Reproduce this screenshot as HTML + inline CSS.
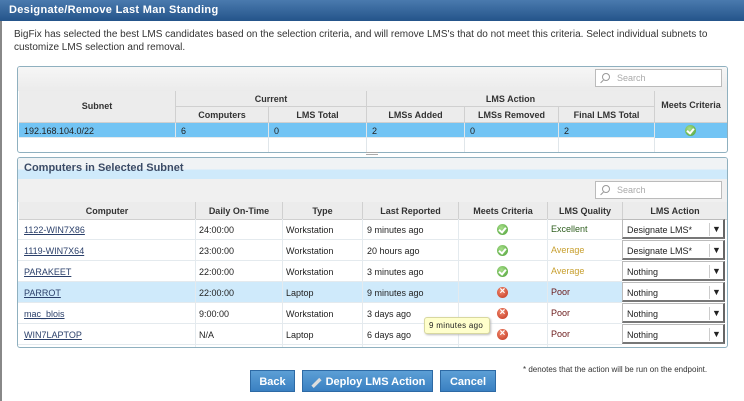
<!DOCTYPE html>
<html><head><meta charset="utf-8"><style>
*{box-sizing:border-box;margin:0;padding:0}
body{width:744px;height:401px;background:#fff;font-family:"Liberation Sans",sans-serif;font-size:9px;color:#222;position:relative;overflow:hidden}
.a{position:absolute}
.title{left:0;top:0;width:744px;height:21px;background:linear-gradient(#4a7aae,#24548a);color:#fff;font-weight:bold;font-size:11px;padding:4px 0 0 9px;letter-spacing:.3px}
.lb{left:0;top:21px;width:2px;height:380px;background:#888}
.txt{left:14px;top:28px;font-size:10px;line-height:13px;color:#333;width:720px}
.panel{border:1px solid #8fb0bf;border-radius:3px;background:#fff;overflow:hidden}
.search{background:#fff;border:1px solid #bbb;height:18px;width:127px;color:#aaa;font-size:9px;padding:3px 0 0 21px}
.search:before{content:"";position:absolute;left:6px;top:3px;width:6px;height:6px;border:1px solid #999;border-radius:50%}
.search:after{content:"";position:absolute;left:4px;top:11px;width:4px;height:1px;background:#999;transform:rotate(-45deg)}
.hd{background:#ececec;border-right:1px solid #d0d0d0;border-bottom:1px solid #d0d0d0;font-weight:bold;color:#333;text-align:center;font-size:9px}
.c{border-right:1px solid #e0e6ea;border-bottom:1px solid #e4eaee;font-size:9px;padding-left:5px;white-space:nowrap}
.ok,.x{width:11px;height:11px;border-radius:50%}
.ok{background:radial-gradient(circle at 40% 35%,#a8df8a,#4a9e35)}
.x{background:radial-gradient(circle at 40% 35%,#f28a6e,#c0331d)}
.ok:after{content:"";position:absolute;left:3px;top:2px;width:3px;height:5px;border:solid #fff;border-width:0 2px 2px 0;transform:rotate(40deg)}
.x:after{content:"×";position:absolute;left:2.5px;top:-1px;color:#fff;font-size:10px;font-weight:bold}
a{color:#2a3f6a;text-decoration:underline}
.sel{background:#fff;border:1px solid #bbb;border-right:2px solid #666;border-bottom:2px solid #777;height:20px;font-size:9px;padding:5px 0 0 4px}
.sel span{position:absolute;right:0;top:3px;width:14px;height:13px;border-left:1px solid #ccc;text-align:center;font-size:9px;line-height:13px}
.btn{background:linear-gradient(#5c9fd6,#3a80c2);border:1px solid #2d6aa5;color:#fff;font-weight:bold;font-size:11px;text-align:center;padding-top:5px;height:22px}
</style></head><body>
<div class="a title">Designate/Remove Last Man Standing</div>
<div class="a lb"></div>
<div class="a txt">BigFix has selected the best LMS candidates based on the selection criteria, and will remove LMS's that do not meet this criteria. Select individual subnets to customize LMS selection and removal.</div>

<div class="a panel" style="left:17px;top:66px;width:711px;height:87px">
 <div class="a" style="left:0;top:0;width:711px;height:24px;background:linear-gradient(#f6f6f6,#ebebeb)"></div>
 <div class="a search" style="left:577px;top:2px">Search</div>
 <div class="a hd" style="left:1px;top:24px;width:157px;height:32px;padding-top:10px">Subnet</div>
 <div class="a hd" style="left:158px;top:24px;width:191px;height:16px;padding-top:3px">Current</div>
 <div class="a hd" style="left:349px;top:24px;width:288px;height:16px;padding-top:3px">LMS Action</div>
 <div class="a hd" style="left:637px;top:24px;width:73px;height:32px;padding-top:9px">Meets Criteria</div>
 <div class="a hd" style="left:158px;top:40px;width:93px;height:16px;padding-top:3px">Computers</div>
 <div class="a hd" style="left:251px;top:40px;width:98px;height:16px;padding-top:3px">LMS Total</div>
 <div class="a hd" style="left:349px;top:40px;width:98px;height:16px;padding-top:3px">LMSs Added</div>
 <div class="a hd" style="left:447px;top:40px;width:94px;height:16px;padding-top:3px">LMSs Removed</div>
 <div class="a hd" style="left:541px;top:40px;width:96px;height:16px;padding-top:3px">Final LMS Total</div>
 <div class="a" style="left:1px;top:56px;width:709px;height:15px;background:#72c4f4"></div>
 <div class="a c" style="left:1px;top:56px;width:157px;height:15px;padding-top:3px">192.168.104.0/22</div>
 <div class="a c" style="left:158px;top:56px;width:93px;height:15px;padding-top:3px">6</div>
 <div class="a c" style="left:251px;top:56px;width:98px;height:15px;padding-top:3px">0</div>
 <div class="a c" style="left:349px;top:56px;width:98px;height:15px;padding-top:3px">2</div>
 <div class="a c" style="left:447px;top:56px;width:94px;height:15px;padding-top:3px">0</div>
 <div class="a c" style="left:541px;top:56px;width:96px;height:15px;padding-top:3px">2</div>
 <div class="a ok" style="left:667px;top:58px"></div>
 <div class="a c" style="left:158px;top:71px;width:93px;height:15px"></div>
 <div class="a c" style="left:251px;top:71px;width:98px;height:15px"></div>
 <div class="a c" style="left:349px;top:71px;width:98px;height:15px"></div>
 <div class="a c" style="left:447px;top:71px;width:94px;height:15px"></div>
 <div class="a c" style="left:541px;top:71px;width:96px;height:15px"></div>
</div>
<div class="a" style="left:366px;top:152px;width:12px;height:3px;border-top:1px solid #aaa;border-bottom:1px solid #aaa"></div>

<div class="a panel" style="left:17px;top:157px;width:711px;height:191px">
 <div class="a" style="left:0;top:0;width:711px;height:21px;background:linear-gradient(#f0f3f5 0%,#f0f3f5 55%,#cfeafb 56%,#cfeafb 100%)"></div>
 <div class="a" style="left:6px;top:4px;font-size:11px;font-weight:bold;color:#3b4b66">Computers in Selected Subnet</div>
 <div class="a" style="left:0;top:21px;width:711px;height:23px;background:#f0f0f0"></div>
 <div class="a search" style="left:577px;top:23px">Search</div>
 <div class="a hd" style="left:1px;top:44px;width:177px;height:18px;padding-top:4px">Computer</div>
 <div class="a hd" style="left:178px;top:44px;width:87px;height:18px;padding-top:4px">Daily On-Time</div>
 <div class="a hd" style="left:265px;top:44px;width:80px;height:18px;padding-top:4px">Type</div>
 <div class="a hd" style="left:345px;top:44px;width:96px;height:18px;padding-top:4px">Last Reported</div>
 <div class="a hd" style="left:441px;top:44px;width:89px;height:18px;padding-top:4px">Meets Criteria</div>
 <div class="a hd" style="left:530px;top:44px;width:75px;height:18px;padding-top:4px">LMS Quality</div>
 <div class="a hd" style="left:605px;top:44px;width:105px;height:18px;padding-top:4px">LMS Action</div>
</div>

<div class="a" style="left:18px;top:282px;width:604px;height:21px;background:#cfeafb"></div>
<div class="a" style="left:18px;top:219px;width:604px;height:128px;background:repeating-linear-gradient(transparent 0 20px,#e4eaee 20px 21px)"></div>
<div class="a" style="left:195px;top:219px;width:1px;height:128px;background:#e4eaee"></div>
<div class="a" style="left:282px;top:219px;width:1px;height:128px;background:#e4eaee"></div>
<div class="a" style="left:362px;top:219px;width:1px;height:128px;background:#e4eaee"></div>
<div class="a" style="left:458px;top:219px;width:1px;height:128px;background:#e4eaee"></div>
<div class="a" style="left:547px;top:219px;width:1px;height:128px;background:#e4eaee"></div>

<div class="a" style="left:24px;top:225px"><a>1122-WIN7X86</a></div>
<div class="a" style="left:24px;top:246px"><a>1119-WIN7X64</a></div>
<div class="a" style="left:24px;top:267px"><a>PARAKEET</a></div>
<div class="a" style="left:24px;top:288px"><a>PARROT</a></div>
<div class="a" style="left:24px;top:309px"><a>mac_blois</a></div>
<div class="a" style="left:24px;top:330px"><a>WIN7LAPTOP</a></div>

<div class="a" style="left:199px;top:225px">24:00:00</div>
<div class="a" style="left:199px;top:246px">23:00:00</div>
<div class="a" style="left:199px;top:267px">22:00:00</div>
<div class="a" style="left:199px;top:288px">22:00:00</div>
<div class="a" style="left:199px;top:309px">9:00:00</div>
<div class="a" style="left:199px;top:330px">N/A</div>

<div class="a" style="left:286px;top:225px">Workstation</div>
<div class="a" style="left:286px;top:246px">Workstation</div>
<div class="a" style="left:286px;top:267px">Workstation</div>
<div class="a" style="left:286px;top:288px">Laptop</div>
<div class="a" style="left:286px;top:309px">Workstation</div>
<div class="a" style="left:286px;top:330px">Laptop</div>

<div class="a" style="left:367px;top:225px">9 minutes ago</div>
<div class="a" style="left:367px;top:246px">20 hours ago</div>
<div class="a" style="left:367px;top:267px">3 minutes ago</div>
<div class="a" style="left:367px;top:288px">9 minutes ago</div>
<div class="a" style="left:367px;top:309px">3 days ago</div>
<div class="a" style="left:367px;top:330px">6 days ago</div>

<div class="a ok" style="left:497px;top:224px"></div>
<div class="a ok" style="left:497px;top:245px"></div>
<div class="a ok" style="left:497px;top:266px"></div>
<div class="a x" style="left:497px;top:287px"></div>
<div class="a x" style="left:497px;top:308px"></div>
<div class="a x" style="left:497px;top:329px"></div>

<div class="a" style="left:551px;top:224px;color:#2e5e1e">Excellent</div>
<div class="a" style="left:551px;top:245px;color:#c8a030">Average</div>
<div class="a" style="left:551px;top:266px;color:#c8a030">Average</div>
<div class="a" style="left:551px;top:287px;color:#6a1a1a">Poor</div>
<div class="a" style="left:551px;top:308px;color:#6a1a1a">Poor</div>
<div class="a" style="left:551px;top:329px;color:#6a1a1a">Poor</div>

<div class="a sel" style="left:622px;top:219px;width:103px">Designate LMS*<span>▼</span></div>
<div class="a sel" style="left:622px;top:240px;width:103px">Designate LMS*<span>▼</span></div>
<div class="a sel" style="left:622px;top:261px;width:103px">Nothing<span>▼</span></div>
<div class="a sel" style="left:622px;top:282px;width:103px">Nothing<span>▼</span></div>
<div class="a sel" style="left:622px;top:303px;width:103px">Nothing<span>▼</span></div>
<div class="a sel" style="left:622px;top:324px;width:103px">Nothing<span>▼</span></div>

<div class="a" style="left:424px;top:317px;width:66px;height:17px;background:#ffffcc;border:1px solid #d8d8a0;border-radius:3px;box-shadow:1px 1px 2px #bbb;font-size:8px;padding:3px 0 0 4px;letter-spacing:.3px">9 minutes ago</div>

<div class="a" style="left:523px;top:365px;font-size:8px;color:#333">* denotes that the action will be run on the endpoint.</div>

<div class="a btn" style="left:250px;top:370px;width:45px">Back</div>
<div class="a btn" style="left:302px;top:370px;width:131px"><span style="display:inline-block;transform:rotate(-45deg);margin-right:5px;color:#ddd">▬</span>Deploy LMS Action</div>
<div class="a btn" style="left:440px;top:370px;width:56px">Cancel</div>
</body></html>
